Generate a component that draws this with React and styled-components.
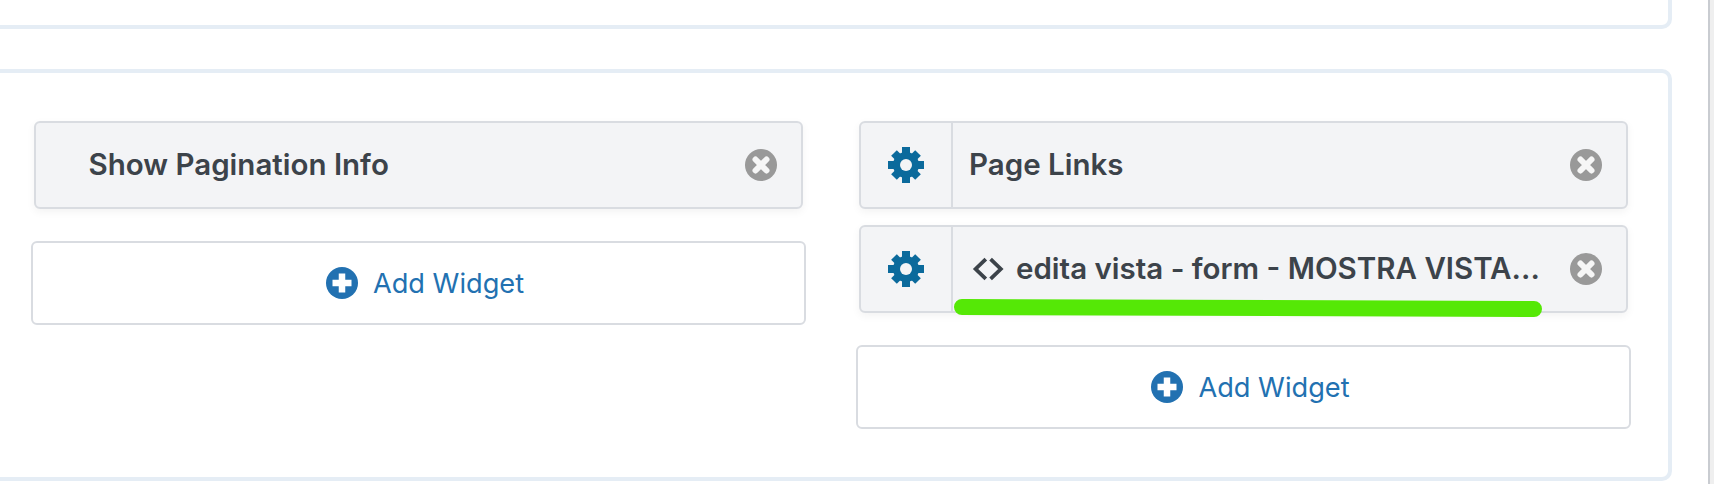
import React from "react";
import styled, { createGlobalStyle } from "styled-components";

const Global = createGlobalStyle`
  html, body { margin: 0; padding: 0; background: #fff; }
  #root { width: 1714px; height: 484px; overflow: hidden; }
  * { box-sizing: border-box; }
`;

const Page = styled.div`
  display: flex;
  width: 1714px;
  height: 484px;
  overflow: hidden;
  font-family: Inter, "Liberation Sans", sans-serif;
`;
const Main = styled.main`
  flex: 1;
  min-width: 0;
  display: flex;
  flex-direction: column;
  gap: 40px;
  margin-top: -40px;
  padding-right: 36px;
  background: #fff;
`;
const Scrollbar = styled.div`
  width: 6px;
  background: #efefef;
  border-left: 2px solid #c9ccd1;
`;
const Panel = styled.section`
  flex: none;
  margin-left: -20px;
  background: #fff;
  border: 4px solid #e5edf5;
  border-radius: 10px;
`;
const EmptyPanel = styled(Panel)`
  height: 69px;
`;
const WidgetPanel = styled(Panel)`
  display: grid;
  grid-template-columns: 1fr 1fr;
  gap: 50.5px;
  padding: 48px 37px 48px 46.5px;
`;
const Column = styled.div`
  display: flex;
  flex-direction: column;
  align-items: stretch;
`;
const Card = styled.div`
  position: relative;
  display: flex;
  align-items: stretch;
  height: 88px;
  margin: 0 3px 16px;
  background: #f3f4f6;
  border: 2px solid #d9dce1;
  border-radius: 6px;
  box-shadow: 0 3px 8px rgba(0, 0, 0, 0.05);
`;
const Handle = styled.div`
  flex: none;
  width: 92px;
  display: flex;
  align-items: center;
  justify-content: center;
  border-right: 2px solid #d9dce1;
  color: #0b6a9c;
`;
const Title = styled.div`
  flex: 1;
  min-width: 0;
  display: flex;
  align-items: center;
  gap: 12px;
  padding-left: ${(p) => p.$inset}px;
  font-size: 29.5px;
  font-weight: 600;
  line-height: 1;
  color: #3c434a;
  white-space: nowrap;
`;
const Remove = styled.div`
  flex: none;
  width: 32px;
  height: 32px;
  margin: auto 24px auto 0;
`;
const AddButton = styled.button`
  display: flex;
  align-items: center;
  justify-content: center;
  gap: 15px;
  height: 84px;
  margin-top: 16px;
  padding: 0 0 0 14px;
  background: #fff;
  border: 2px solid #d9dce1;
  border-radius: 6px;
  color: #2271b1;
  font-family: inherit;
  font-size: 27.2px;
  font-weight: 400;
`;
const Highlight = styled.svg`
  position: absolute;
  left: 92px;
  top: 72px;
  overflow: visible;
`;

const Gear = () => (
  <svg width="36" height="36" viewBox="0 0 36 36" fill="currentColor">
    <rect x="14" y="0" width="8" height="36" />
    <rect x="0" y="14" width="36" height="8" />
    <rect x="14" y="1" width="8" height="34" transform="rotate(45 18 18)" />
    <rect x="14" y="1" width="8" height="34" transform="rotate(-45 18 18)" />
    <circle cx="18" cy="18" r="13" />
    <circle cx="18" cy="18" r="6" fill="#f3f4f6" />
  </svg>
);

const CloseIcon = () => (
  <svg width="32" height="32" viewBox="0 0 32 32">
    <circle cx="16" cy="16" r="16" fill="#999" />
    <path d="M10.5 10.5 21.5 21.5M21.5 10.5 10.5 21.5" stroke="#f6f6f6" strokeWidth="6" strokeLinecap="round" />
  </svg>
);

const PlusIcon = () => (
  <svg width="32" height="32" viewBox="0 0 32 32">
    <circle cx="16" cy="16" r="16" fill="#2271b1" />
    <path d="M16 6.5v19M6.5 16h19" stroke="#fff" strokeWidth="6.5" />
  </svg>
);

const CodeIcon = () => (
  <svg width="32" height="26" viewBox="0 0 32 26" fill="none" stroke="#3c434a" strokeWidth="3.8">
    <path d="M13.8 3.2 3.6 13l10.2 9.8M18.6 3.2 28.8 13l-10.2 9.8" />
  </svg>
);

const Add = () => (
  <AddButton>
    <PlusIcon />
    Add Widget
  </AddButton>
);

export default function App() {
  return (
    <Page>
      <Global />
      <Main>
        <EmptyPanel />
        <WidgetPanel>
          <Column>
            <Card>
              <Title $inset={53}>Show Pagination Info</Title>
              <Remove><CloseIcon /></Remove>
            </Card>
            <Add />
          </Column>
          <Column>
            <Card>
              <Handle><Gear /></Handle>
              <Title $inset={16}>Page Links</Title>
              <Remove><CloseIcon /></Remove>
            </Card>
            <Card>
              <Handle><Gear /></Handle>
              <Title $inset={19}>
                <CodeIcon />
                edita vista - form - MOSTRA VISTA...
              </Title>
              <Remove><CloseIcon /></Remove>
              <Highlight width="588" height="18">
                <path d="M9 8 L581 10" stroke="#55e806" strokeWidth="16" strokeLinecap="round" fill="none" />
              </Highlight>
            </Card>
            <Add />
          </Column>
        </WidgetPanel>
      </Main>
      <Scrollbar />
    </Page>
  );
}
